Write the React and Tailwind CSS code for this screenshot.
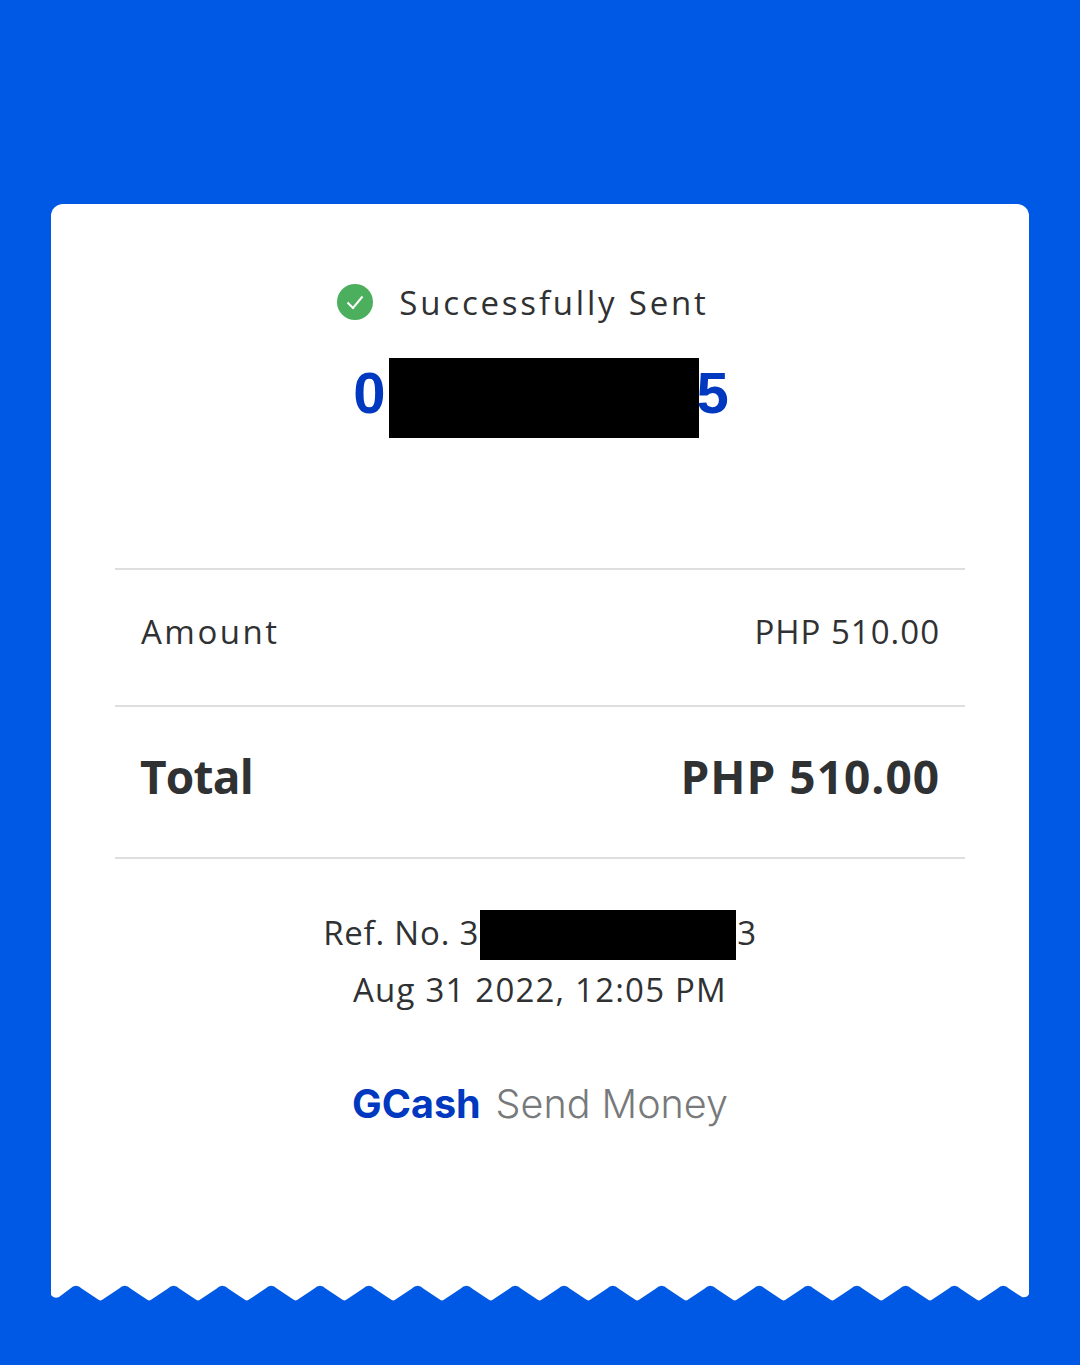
const RECEIPT_FONT = "font-['Open_Sans','Liberation_Sans',sans-serif]";

function TearEdge() {
  // blue teeth repeat every 48.8px along the bottom of the receipt
  const peaks = Array.from({ length: 20 }, (_, i) => 25 + i * 48.8);
  let d = "M0 -1 L978 -1 L978 9 Q976 13 971 12";
  for (let i = 19; i >= 0; i--) {
    const x = peaks[i];
    d += ` L${x + 6} 3.8 Q${x} -2.2 ${x - 6} 3.8`;
    if (i > 0) {
      const valley = x - 24.4;
      d += ` L${valley + 3} 14 Q${valley} 16.8 ${valley - 3} 14`;
    }
  }
  d += " L8 12 Q3 14 0 10 Z";
  return (
    <svg className="block w-full h-[22px]" viewBox="0 -1 978 22" fill="#fff">
      <path d={d} />
    </svg>
  );
}

function Row({ label, value, big }) {
  if (big) {
    return (
      <div className="flex justify-between items-center h-[150px] px-[26px] pb-[12px] text-[46px] font-bold text-[#2f3133]">
        <span className="tracking-[-0.8px] -ml-[1px]">{label}</span>
        <span className="tracking-[1px] -mr-[1px]">{value}</span>
      </div>
    );
  }
  return (
    <div className="flex justify-between items-center h-[135px] px-[26px] pb-[12px] text-[33px] text-[#2f3133]">
      <span className="tracking-[2.5px]">{label}</span>
      <span className="tracking-[1px] -mr-[1px]">{value}</span>
    </div>
  );
}

export default function App() {
  return (
    <div className={`min-h-[1365px] bg-[#0059e4] pt-[204px] px-[51px] ${RECEIPT_FONT}`}>
      <div className="bg-white rounded-t-[12px] px-[64px] pt-[80px] h-[1080px] flex flex-col">
        <div className="flex justify-center items-center h-[36px] gap-[26px] pr-[34px]">
          <svg width="36" height="36" viewBox="0 0 36 36">
            <circle cx="18" cy="18" r="18" fill="#4caf5d" />
            <path d="M10.5 18.5 L16 24 L25.5 12.5" fill="none" stroke="#fff" strokeWidth="2" />
          </svg>
          <span className="mt-[2px] text-[33px] tracking-[2.8px] text-[#2f3133]">Successfully Sent</span>
        </div>

        <div className="flex justify-center items-center mt-[38px] h-[80px] pl-[2px] text-[58px] font-bold text-[#0039c0] font-['Liberation_Sans',sans-serif]">
          <span className="-mt-[12px]">0</span>
          <div className="w-[310px] h-[80px] bg-black ml-[3px] -mr-[2px] relative" />
          <span className="-mt-[12px]">5</span>
        </div>

        <div className="mt-[130px] border-t-2 border-[#dedede]">
          <Row label="Amount" value="PHP 510.00" />
        </div>
        <div className="border-t-2 border-[#dedede]">
          <Row label="Total" value="PHP 510.00" big />
        </div>
        <div className="border-t-2 border-[#dedede]" />

        <div className="flex justify-center items-center mt-[51px] h-[50px] text-[33px] tracking-[0.8px] text-[#2f3133]">
          <span className="-mt-[4px]">Ref. No. 3</span>
          <div className="w-[256px] h-[50px] bg-black ml-[1px] mr-[1px]" />
          <span className="-mt-[4px]">3</span>
        </div>
        <div className="text-center mt-[5px] h-[50px] leading-[50px] text-[33px] tracking-[1.2px] text-[#2f3133]">
          Aug 31 2022, 12:05 PM
        </div>

        <div className="flex justify-center items-baseline gap-[15px] mt-[60px] text-[39.5px] font-['Inter',sans-serif]">
          <span className="font-bold text-[#0039c0]">GCash</span>
          <span className="font-light text-[#77797b]">Send Money</span>
        </div>
      </div>
      <TearEdge />
    </div>
  );
}
